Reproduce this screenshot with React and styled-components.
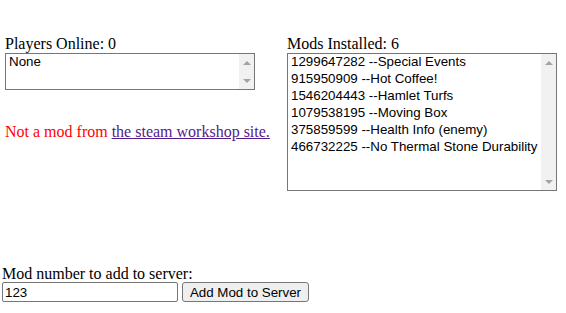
import { createGlobalStyle, styled } from "styled-components";

const GlobalStyle = createGlobalStyle`
  body {
    margin: 0;
    background: #ffffff;
    font-family: "Liberation Serif", "Times New Roman", serif;
    font-size: 16px;
    color: #000000;
  }
`;

const mods = [
  "1299647282 --Special Events",
  "915950909 --Hot Coffee!",
  "1546204443 --Hamlet Turfs",
  "1079538195 --Moving Box",
  "375859599 --Health Info (enemy)",
  "466732225 --No Thermal Stone Durability",
];

const Page = styled.div`
  padding-top: 35px;
`;
const TopRow = styled.div`
  display: flex;
  align-items: flex-start;
  gap: 32px;
  padding-left: 5px;
`;
const Column = styled.div`
  width: ${(p) => p.$width}px;
  display: flex;
  flex-direction: column;
`;
const Label = styled.div`
  line-height: 18px;
  white-space: nowrap;
`;
const Box = styled.div`
  box-sizing: border-box;
  width: ${(p) => p.$width}px;
  height: ${(p) => p.$height}px;
  border: 1px solid #767676;
  display: flex;
  background: #ffffff;
`;
const Items = styled.div`
  flex: 1;
  margin-top: -1px;
  padding: 0 3px;
  font-family: "Liberation Sans", Arial, sans-serif;
  font-size: 13.33px;
`;
const Item = styled.div`
  line-height: 17px;
  white-space: nowrap;
`;
const Track = styled.div`
  width: 15px;
  background: #f1f1f1;
  display: flex;
  flex-direction: column;
  justify-content: space-between;
`;
const ArrowButton = styled.div`
  height: 17px;
  display: flex;
  align-items: center;
  justify-content: center;
`;
const Arrow = styled.div`
  width: 0;
  height: 0;
  border-left: 4px solid transparent;
  border-right: 4px solid transparent;
  ${(p) =>
    p.$down
      ? "border-top: 4px solid #a3a3a3;"
      : "border-bottom: 4px solid #a3a3a3;"}
`;
const Notice = styled.div`
  margin-top: 33px;
  line-height: 18px;
  color: #ff0000;
  white-space: nowrap;
`;
const Link = styled.a`
  color: #551a8b;
  text-decoration: underline;
`;
const AddForm = styled.div`
  margin-top: 74px;
  padding-left: 2px;
`;
const FormLabel = styled.div`
  line-height: 17px;
`;
const InputRow = styled.div`
  display: flex;
  gap: 4px;
`;
const Input = styled.input`
  box-sizing: border-box;
  width: 176px;
  height: 20px;
  margin: 0;
  padding: 1px 2px;
  border: 1px solid #767676;
  border-radius: 2px;
  font-family: "Liberation Sans", Arial, sans-serif;
  font-size: 13.33px;
  color: #000000;
  outline: none;
`;
const Button = styled.button`
  box-sizing: border-box;
  width: 127px;
  height: 20px;
  margin: 0;
  padding: 1px 6px;
  background: #efefef;
  border: 1px solid #767676;
  border-radius: 3px;
  font-family: "Liberation Sans", Arial, sans-serif;
  font-size: 13.33px;
  color: #000000;
`;

const ListBox = ({ width, height, items }) => (
  <Box $width={width} $height={height}>
    <Items>
      {items.map((item) => (
        <Item key={item}>{item}</Item>
      ))}
    </Items>
    <Track>
      <ArrowButton>
        <Arrow />
      </ArrowButton>
      <ArrowButton>
        <Arrow $down />
      </ArrowButton>
    </Track>
  </Box>
);

const App = () => {
  return (
    <Page>
      <GlobalStyle />
      <TopRow>
        <Column $width={250}>
          <Label>Players Online: 0</Label>
          <ListBox width={250} height={37} items={["None"]} />
          <Notice>
            Not a mod from <Link href="#">the steam workshop site.</Link>
          </Notice>
        </Column>
        <Column $width={270}>
          <Label>Mods Installed: 6</Label>
          <ListBox width={270} height={138} items={mods} />
        </Column>
      </TopRow>
      <AddForm>
        <FormLabel>Mod number to add to server:</FormLabel>
        <InputRow>
          <Input defaultValue="123" />
          <Button>Add Mod to Server</Button>
        </InputRow>
      </AddForm>
    </Page>
  );
};

export default App;
